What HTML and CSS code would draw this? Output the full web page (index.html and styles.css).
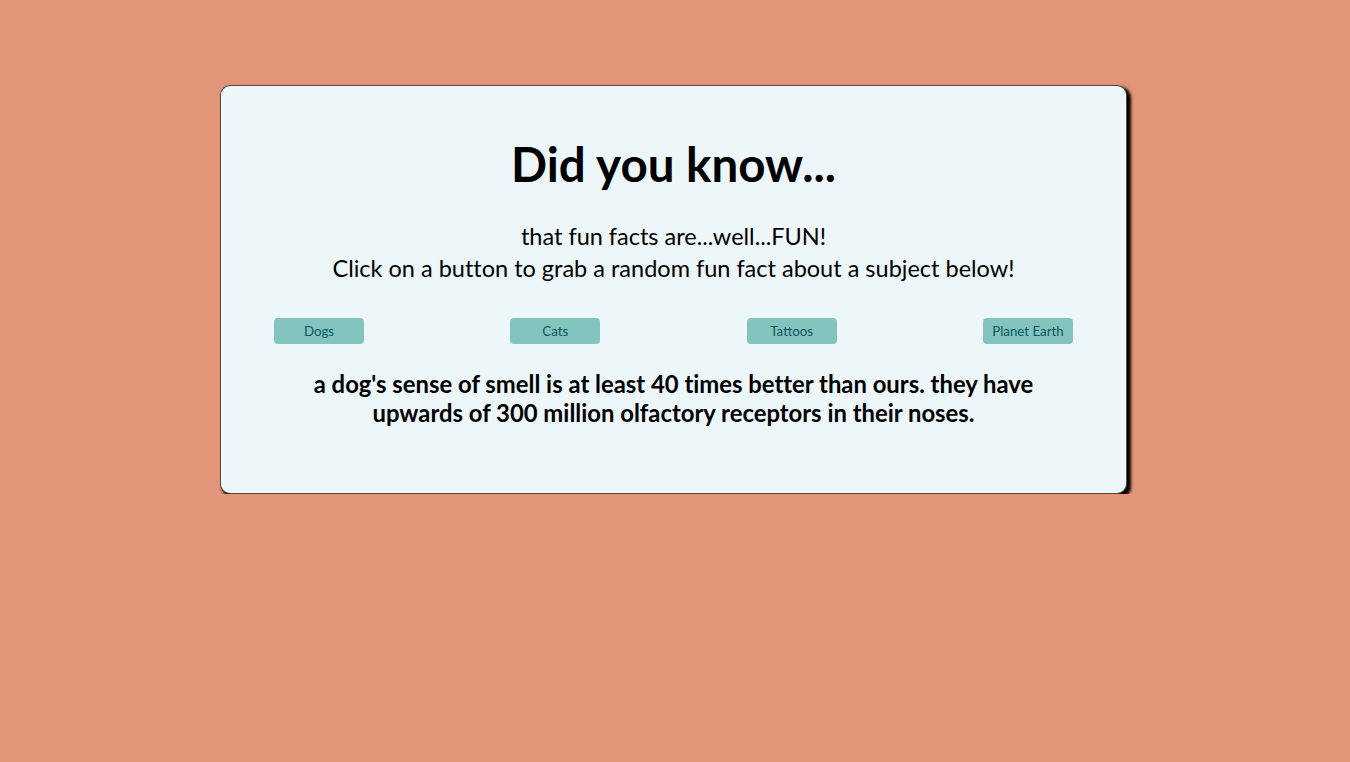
FILE: index.html
```html
<!DOCTYPE html>
<html lang="en">
<head>
<meta charset="utf-8">
<title>Did you know...</title>
<link rel="stylesheet" href="styles.css">
</head>
<body>
<main class="card">
  <h1 class="title">Did you know...</h1>
  <p class="intro">that fun facts are...well...FUN!<br>Click on a button to grab a random fun fact about a subject below!</p>
  <div class="buttons">
    <button class="btn">Dogs</button>
    <button class="btn">Cats</button>
    <button class="btn">Tattoos</button>
    <button class="btn">Planet Earth</button>
  </div>
  <p class="fact">a dog's sense of smell is at least 40 times better than ours. they have upwards of 300 million olfactory receptors in their noses.</p>
</main>
</body>
</html>
```
FILE: styles.css
```css
html, body {
  margin: 0;
  padding: 0;
}
body {
  background: #e29578;
  font-family: Lato, "Open Sans", sans-serif;
  font-variant-ligatures: none;
  color: #000;
  padding-top: 85px;
}
.card {
  box-sizing: border-box;
  width: 907px;
  height: 409px;
  margin: 0 0 0 220px;
  background: #edf6f9;
  border: 1px solid rgba(40, 15, 5, 0.75);
  border-radius: 10px;
  box-shadow: 3px 3px 3px 1px #000;
  padding: 49px 53px 0;
  text-align: center;
}
.title {
  margin: 0;
  font-size: 47.5px;
  font-weight: 700;
  line-height: 58px;
}
.intro {
  margin: 27px 0 0;
  font-size: 23.5px;
  line-height: 32px;
}
.buttons {
  display: flex;
  justify-content: space-between;
  margin-top: 34px;
}
.btn {
  width: 90px;
  height: 26px;
  border: none;
  border-radius: 4px;
  background: #83c5be;
  color: #0b5560;
  font-family: Lato, sans-serif;
  font-size: 13.3px;
  padding: 0;
}
.fact {
  margin: 25px auto 0;
  width: 750px;
  font-size: 23.85px;
  font-weight: 700;
  line-height: 29px;
}
```
